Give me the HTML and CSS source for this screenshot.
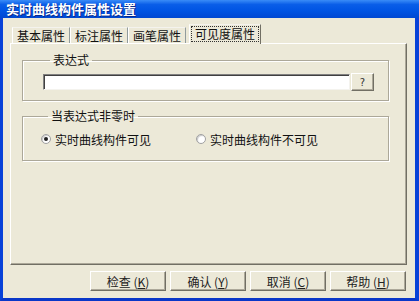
FILE: index.html
```html
<!DOCTYPE html>
<html>
<head>
<meta charset="utf-8">
<link rel="stylesheet" href="styles.css">
</head>
<body>
<div class="window">
  <div class="titlebar">实时曲线构件属性设置</div>
  <div class="client">
    <div class="tabs">
      <div class="tab">基本属性</div>
      <div class="tab">标注属性</div>
      <div class="tab">画笔属性</div>
      <div class="tab active"><span class="focus">可见度属性</span></div>
    </div>
    <div class="panel">
      <fieldset class="group g1">
        <legend>表达式</legend>
        <div class="exprrow">
          <div class="input"></div>
          <div class="btn qbtn">?</div>
        </div>
      </fieldset>
      <fieldset class="group g2">
        <legend>当表达式非零时</legend>
        <div class="radios">
          <div class="opt"><span class="radio on"></span><span>实时曲线构件可见</span></div>
          <div class="opt"><span class="radio"></span><span>实时曲线构件不可见</span></div>
        </div>
      </fieldset>
    </div>
    <div class="buttons">
      <div class="btn dbtn">检查 (<u>K</u>)</div>
      <div class="btn dbtn">确认 (<u>Y</u>)</div>
      <div class="btn dbtn">取消 (<u>C</u>)</div>
      <div class="btn dbtn">帮助 (<u>H</u>)</div>
    </div>
  </div>
</div>
</body>
</html>
```

FILE: styles.css
```css
* { box-sizing: border-box; }
html, body { margin: 0; padding: 0; }
body {
  width: 419px;
  height: 301px;
  overflow: hidden;
  font-family: "Noto Sans CJK SC", "Liberation Sans", sans-serif;
  font-size: 12px;
  color: #000;
}
.window {
  width: 419px;
  height: 301px;
  display: flex;
  flex-direction: column;
  background: #0a3fd6;
  border-left: 3px solid #0842d8;
  border-right: 4px solid #0842d8;
  border-bottom: 3px solid #0a37c8;
}
.titlebar {
  height: 18px;
  margin: 0 -4px 0 -3px;
  padding-left: 6px;
  line-height: 18px;
  font-size: 13px;
  font-weight: bold;
  color: #fff;
  text-shadow: 1px 1px 0 #0a2a8a;
  background: linear-gradient(to bottom, #3a8cf7 0%, #0a5ee8 25%, #0054e3 60%, #0048d2 100%);
}
.client {
  flex: 1;
  background: #ece9d8;
  padding: 6px 0 0 7px;
  display: flex;
  flex-direction: column;
}
.tabs {
  display: flex;
  align-items: flex-end;
  height: 19px;
  padding-left: 2px;
}
.tab {
  height: 16px;
  line-height: 15px;
  padding: 0 4px 0 4px;
  border-left: 1px solid #fff;
  border-right: 1px solid #919b9c;
  border-top: 1px solid #f4f3ee;
  color: #111;
}
.tab.active {
  height: 20px;
  margin-left: 3px;
  margin-bottom: -1px;
  padding: 1px 1px 0 1px;
  background: #ece9d8;
  border-right: 1px solid #716f64;
  position: relative;
}
.focus {
  display: block;
  height: 16px;
  line-height: 14px;
  padding: 0 3px 0 3px;
  border: 1px dotted #333;
}
.panel {
  width: 397px;
  height: 222px;
  border-top: 1px solid #fff;
  border-left: 1px solid #fff;
  border-right: 1px solid #716f64;
  border-bottom: 1px solid #716f64;
  box-shadow: inset -1px -1px 0 #aca899;
  padding: 9px 0 0 11px;
}
.group {
  margin: 0;
  width: 367px;
  border: 1px solid #aca899;
  box-shadow: 1px 1px 0 #fff, inset 1px 1px 0 #fff;
  padding: 0;
  min-width: 0;
}
.group legend {
  margin-left: 7px;
  padding: 0 3px;
  line-height: 14px;
  height: 14px;
  color: #111;
}
.g1 { padding: 6px 14px 9px 20px; }
.g2 { margin-top: 8px; padding: 9px 10px 14px 18px; }
.exprrow {
  display: flex;
  align-items: center;
  height: 18px;
}
.input {
  width: 307px;
  height: 16px;
  background: #fff;
  border-top: 1px solid #808080;
  border-left: 1px solid #808080;
  border-right: 1px solid #f4f3ee;
  border-bottom: 1px solid #f4f3ee;
  box-shadow: inset 1px 1px 0 #404040;
}
.btn {
  display: flex;
  align-items: center;
  justify-content: center;
  background: #ece9d8;
  border-top: 1px solid #fff;
  border-left: 1px solid #fff;
  border-right: 1px solid #716f64;
  border-bottom: 1px solid #716f64;
  box-shadow: inset -1px -1px 0 #aca899;
}
.qbtn {
  width: 23px;
  height: 18px;
  margin-left: 1px;
  font-size: 10px;
  font-family: "DejaVu Sans", sans-serif;
  color: #333;
}
.radios {
  display: flex;
  align-items: center;
  height: 14px;
}
.opt {
  display: flex;
  align-items: center;
  gap: 4px;
  width: 155px;
  white-space: nowrap;
  color: #111;
}
.radio {
  width: 10px;
  height: 10px;
  border-radius: 50%;
  background: #fff;
  border: 1px solid #a0a0a0;
  box-shadow: inset 1px 1px 1px #c8c8c8;
  display: flex;
  align-items: center;
  justify-content: center;
}
.radio.on::after {
  content: "";
  width: 4px;
  height: 4px;
  border-radius: 50%;
  background: #222;
}
.buttons {
  display: flex;
  justify-content: flex-end;
  gap: 4px;
  margin-top: 6px;
  padding-right: 9px;
}
.dbtn {
  width: 76px;
  height: 20px;
  font-size: 12px;
  color: #222;
  white-space: pre;
}
.dbtn u { text-underline-offset: 1px; }
```
